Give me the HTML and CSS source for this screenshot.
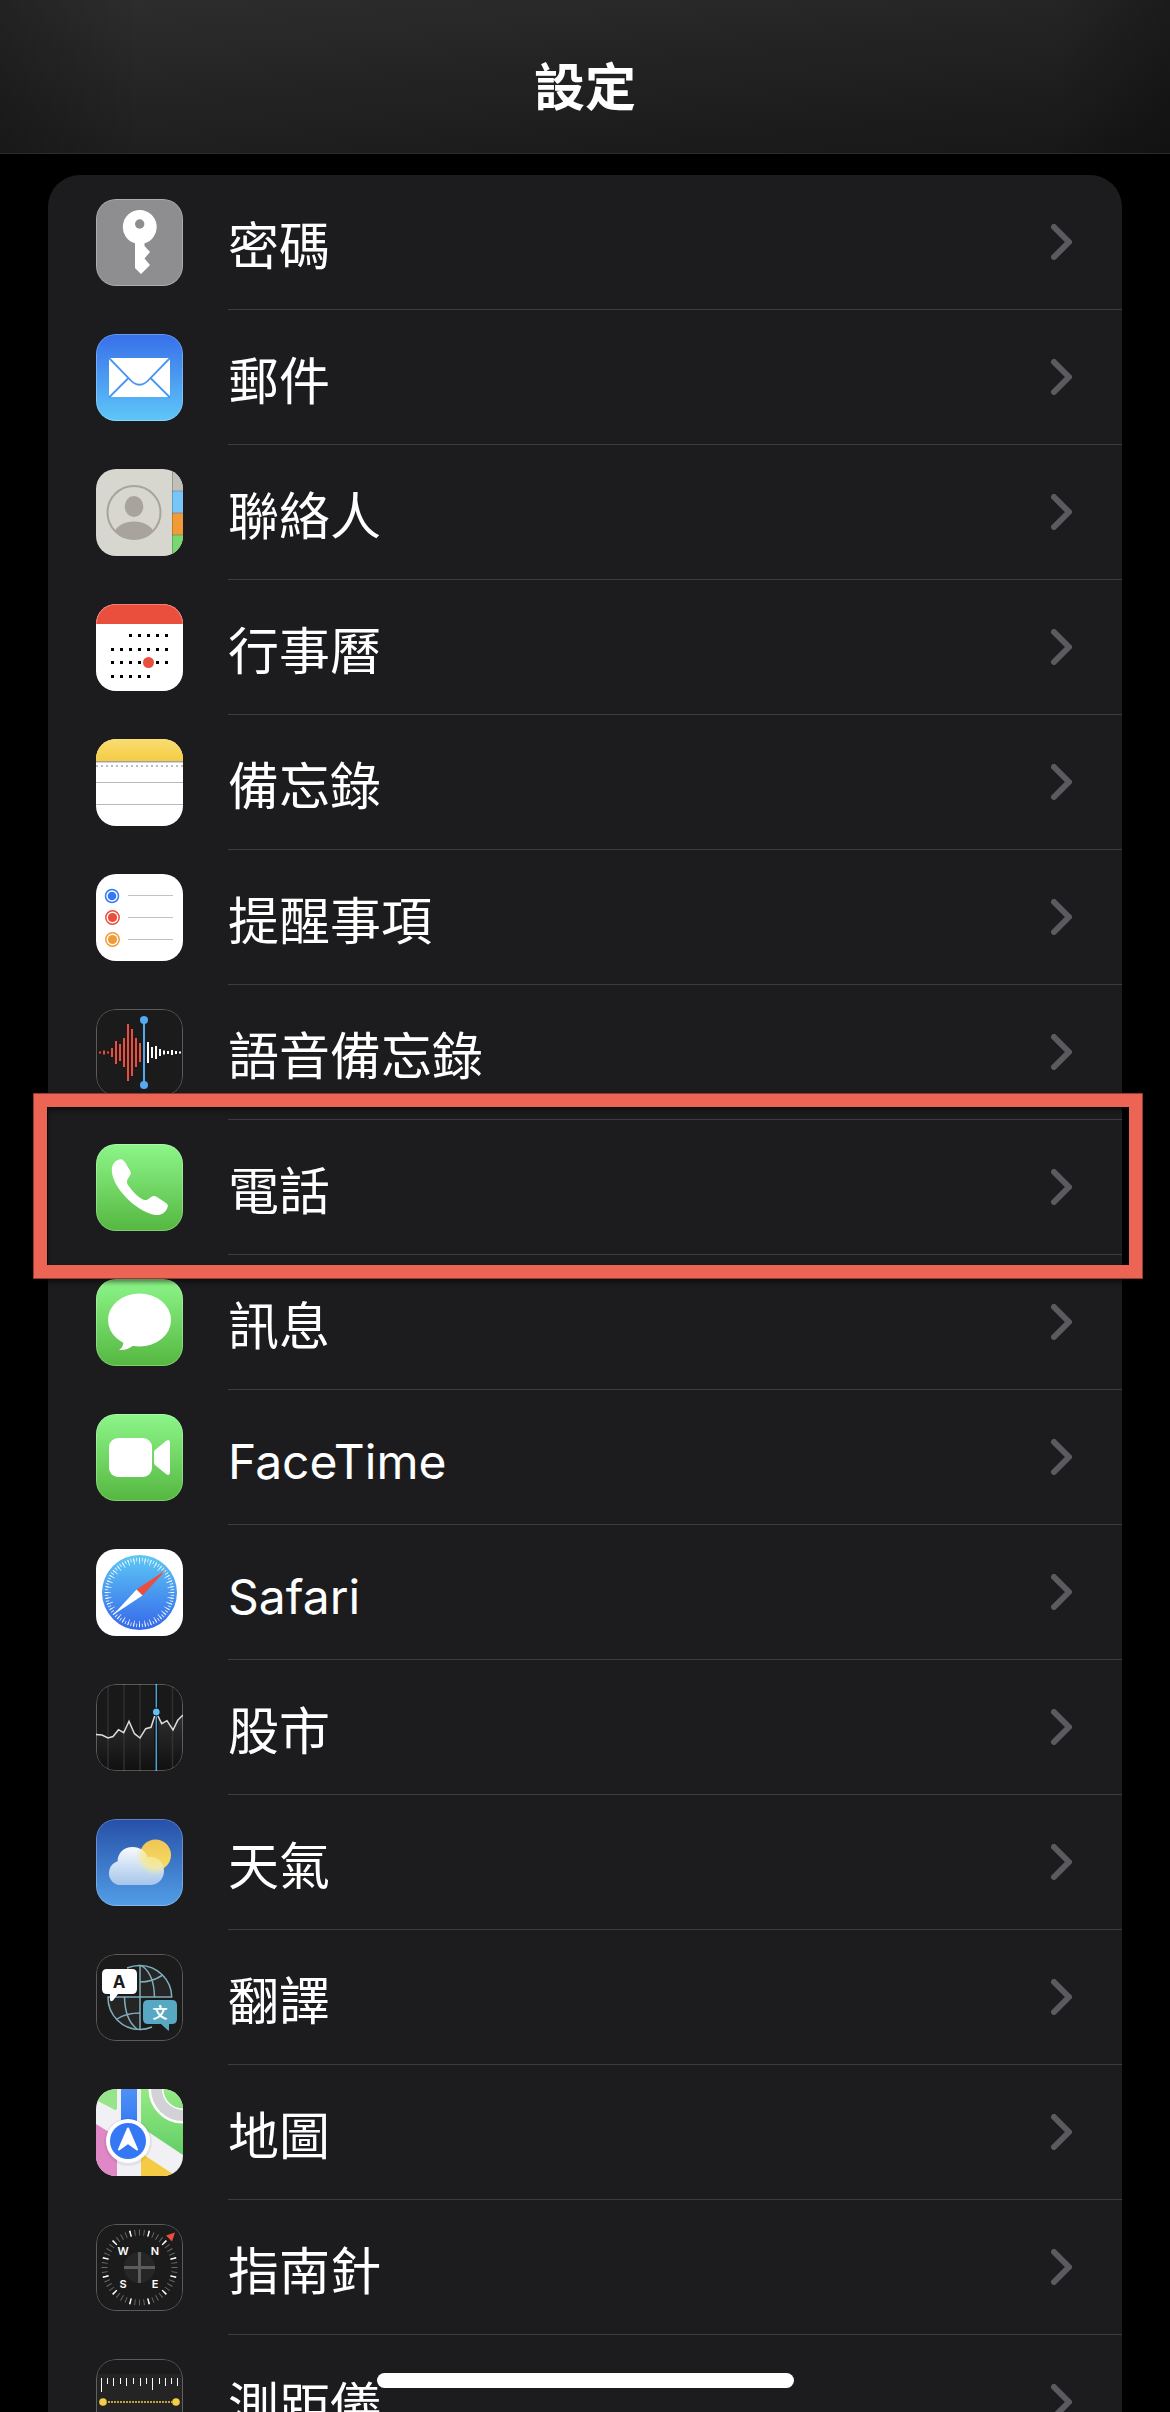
FILE: index.html
```html
<!DOCTYPE html>
<html lang="zh-Hant">
<head>
    <meta charset="UTF-8">
    <meta name="viewport" content="width=device-width, initial-scale=1.0">
    <title>設定</title>
    <link rel="stylesheet" href="styles.css">
</head>
<body>
    <!-- Shared gradients and the row arrow -->
    <svg class="defs" width="0" height="0" aria-hidden="true">
        <defs>
            <linearGradient id="green" x1="0" y1="0" x2="0" y2="1">
                <stop offset="0" stop-color="#8df68a"/>
                <stop offset="1" stop-color="#55b740"/>
            </linearGradient>
            <linearGradient id="blue" x1="0" y1="0" x2="0" y2="1">
                <stop offset="0" stop-color="#376fea"/>
                <stop offset="1" stop-color="#5fc7f8"/>
            </linearGradient>
            <linearGradient id="dial" x1="0" y1="0" x2="0" y2="1">
                <stop offset="0" stop-color="#5ec8f5"/>
                <stop offset="1" stop-color="#3568ea"/>
            </linearGradient>
            <linearGradient id="pad" x1="0" y1="0" x2="0" y2="1">
                <stop offset="0" stop-color="#f9dd72"/>
                <stop offset="1" stop-color="#f5cc43"/>
            </linearGradient>
            <linearGradient id="chart" x1="0" y1="0" x2="0" y2="1">
                <stop offset="0" stop-color="#303031"/>
                <stop offset="1" stop-color="#101010"/>
            </linearGradient>
            <linearGradient id="sky" x1="0" y1="0" x2="0" y2="1">
                <stop offset="0" stop-color="#2750a8"/>
                <stop offset="1" stop-color="#529ee6"/>
            </linearGradient>
            <linearGradient id="sun" x1="0" y1="0" x2="0" y2="1">
                <stop offset="0" stop-color="#efc557"/>
                <stop offset="1" stop-color="#f7de63"/>
            </linearGradient>
            <linearGradient id="cloud" gradientUnits="userSpaceOnUse" x1="0" y1="28" x2="0" y2="66">
                <stop offset="0" stop-color="#f8fafd"/>
                <stop offset="1" stop-color="#a6c6ea"/>
            </linearGradient>
            <radialGradient id="glow" gradientUnits="userSpaceOnUse" cx="59" cy="37" r="19">
                <stop offset="0" stop-color="#f7e583"/>
                <stop offset="0.6" stop-color="#f4ea9a" stop-opacity="0.9"/>
                <stop offset="1" stop-color="#f4ea9a" stop-opacity="0"/>
            </radialGradient>
            <linearGradient id="park" x1="0" y1="0" x2="0" y2="1">
                <stop offset="0" stop-color="#96ea84"/>
                <stop offset="1" stop-color="#62ce66"/>
            </linearGradient>
            <linearGradient id="road" x1="0" y1="0" x2="0" y2="1">
                <stop offset="0" stop-color="#4f91f5"/>
                <stop offset="1" stop-color="#3377f3"/>
            </linearGradient>
            <clipPath id="portrait"><circle cx="38" cy="43.5" r="26.5"/></clipPath>
            <path id="cloud-shape" d="M24.5 66A11.5 11.5 0 0 1 13 54.5C13 48 17 43.5 21.5 42.5C21.5 34 28 28 36.5 28C44 28 50 32.5 51.5 38.5C61 37 68 43.5 68 52C68 60 62 66 54 66Z"/>
            <symbol id="chevron" viewBox="0 0 21 36">
                <path d="M3 3L18 18L3 33" fill="none" stroke="#5b5b5f" stroke-width="6" stroke-linecap="round" stroke-linejoin="round"/>
            </symbol>
        </defs>
    </svg>

    <div class="screen">
        <header class="navbar">
            <h1>設定</h1>
        </header>

        <main class="content">
            <ul class="settings-list">
                <li>
                    <a href="#passwords">
                        <svg class="icon" viewBox="0 0 87 87" aria-hidden="true">
                            <rect width="87" height="87" fill="#8e8e91"/>
                            <path d="M44 11A17 17 0 0 1 48.5 44.3V47L54 53L48.5 59.5L54 66L45 75L39 69V44.3A17 17 0 0 1 44 11Z" fill="#fff"/>
                            <circle cx="43.7" cy="25" r="4.7" fill="#8e8e91"/>
                            <rect class="rim" x="0.5" y="0.5" width="86" height="86" rx="19"/>
                        </svg>
                        <span class="label">密碼</span>
                        <svg class="arrow" aria-hidden="true"><use href="#chevron"/></svg>
                    </a>
                </li>
                <li>
                    <a href="#mail">
                        <svg class="icon" viewBox="0 0 87 87" aria-hidden="true">
                            <rect width="87" height="87" fill="url(#blue)"/>
                            <rect x="13" y="24" width="61" height="39" rx="2" fill="#fff"/>
                            <path d="M13 24L33 44.5Q43.5 57 54 44.5L74 24M32.5 44L13 63.5M54.5 44L74 63.5" fill="none" stroke="#4796f1" stroke-width="1.8"/>
                            <rect class="rim" x="0.5" y="0.5" width="86" height="86" rx="19"/>
                        </svg>
                        <span class="label">郵件</span>
                        <svg class="arrow" aria-hidden="true"><use href="#chevron"/></svg>
                    </a>
                </li>
                <li>
                    <a href="#contacts">
                        <svg class="icon" viewBox="0 0 87 87" aria-hidden="true">
                            <rect width="87" height="87" fill="#d7d7cf"/>
                            <rect x="76" width="11" height="22" fill="#c0c0b9"/>
                            <rect x="76" y="22" width="11" height="22" fill="#78c5f8"/>
                            <rect x="76" y="44" width="11" height="22" fill="#f19b38"/>
                            <rect x="76" y="66" width="11" height="21" fill="#78d772"/>
                            <path d="M76.5 0V87M76 22H87M76 44H87M76 66H87" stroke="#000" stroke-opacity="0.2"/>
                            <ellipse cx="38" cy="37.5" rx="9.3" ry="10.5" fill="#a8a39d"/>
                            <ellipse cx="38" cy="66" rx="20" ry="13.5" fill="#a8a39d" clip-path="url(#portrait)"/>
                            <circle cx="38" cy="43.5" r="26.5" fill="none" stroke="#a8a39d" stroke-width="2"/>
                        </svg>
                        <span class="label">聯絡人</span>
                        <svg class="arrow" aria-hidden="true"><use href="#chevron"/></svg>
                    </a>
                </li>
                <li>
                    <a href="#calendar">
                        <svg class="icon" viewBox="0 0 87 87" aria-hidden="true">
                            <rect width="87" height="87" fill="#fff"/>
                            <rect width="87" height="20" fill="#ea4e3d"/>
                            <path d="M33 31.5H74M15 45.5H74M15 58.5H74M15 72.5H54" stroke="#000" stroke-width="3" stroke-dasharray="3 6"/>
                            <circle cx="52.5" cy="58.5" r="5.5" fill="#ea4e3d"/>
                            <rect class="rim" x="0.5" y="0.5" width="86" height="86" rx="19"/>
                        </svg>
                        <span class="label">行事曆</span>
                        <svg class="arrow" aria-hidden="true"><use href="#chevron"/></svg>
                    </a>
                </li>
                <li>
                    <a href="#notes">
                        <svg class="icon" viewBox="0 0 87 87" aria-hidden="true">
                            <rect width="87" height="87" fill="#fff"/>
                            <rect width="87" height="22" fill="url(#pad)"/>
                            <path d="M0 22.5H87" stroke="#a3a3a6"/>
                            <path d="M0 23.5H87" stroke="#d3d3d6"/>
                            <path d="M0 27H87" stroke="#bcbcbe" stroke-width="2" stroke-dasharray="2 3"/>
                            <path d="M0 43.5H87M0 65.5H87" stroke="#b9b9bb"/>
                        </svg>
                        <span class="label">備忘錄</span>
                        <svg class="arrow" aria-hidden="true"><use href="#chevron"/></svg>
                    </a>
                </li>
                <li>
                    <a href="#reminders">
                        <svg class="icon" viewBox="0 0 87 87" aria-hidden="true">
                            <rect width="87" height="87" fill="#fff"/>
                            <g fill="none" stroke-width="1.5">
                                <circle cx="16" cy="22" r="6.5" stroke="#3478f6"/>
                                <circle cx="16.5" cy="43.5" r="6.7" stroke="#ea4e3d"/>
                                <circle cx="16.5" cy="65.5" r="6.7" stroke="#f19a37"/>
                            </g>
                            <circle cx="16" cy="22" r="4.3" fill="#3478f6"/>
                            <circle cx="16.5" cy="43.5" r="4.6" fill="#ea4e3d"/>
                            <circle cx="16.5" cy="65.5" r="4.6" fill="#f19a37"/>
                            <path d="M32 21.5H77M32 43.5H77M32 65.5H77" stroke="#c2c2c4"/>
                        </svg>
                        <span class="label">提醒事項</span>
                        <svg class="arrow" aria-hidden="true"><use href="#chevron"/></svg>
                    </a>
                </li>
                <li>
                    <a href="#voice-memos">
                        <svg class="icon" viewBox="0 0 87 87" aria-hidden="true">
                            <rect width="87" height="87" fill="#1b1b1b"/>
                            <path d="M4 42.5v2M8 41.5v4M12 42.5v2M16 39v9M20 32v23M24 35v17M28 29v29M32 15v57M36 20v47M40 29v29M44 34v19" stroke="#ea4e3d" stroke-width="2"/>
                            <path d="M52 33v21M56 38v11M60 37v13M64 40v7M68 41.5v4M72 42v3M76 41v5M80 42v3M84 42.5v2" stroke="#fff" stroke-width="2"/>
                            <path d="M48 11V76" stroke="#54a9f0" stroke-width="2"/>
                            <circle cx="48" cy="11" r="4" fill="#54a9f0"/>
                            <circle cx="48" cy="76" r="4" fill="#54a9f0"/>
                            <rect class="rim" x="0.5" y="0.5" width="86" height="86" rx="19"/>
                        </svg>
                        <span class="label">語音備忘錄</span>
                        <svg class="arrow" aria-hidden="true"><use href="#chevron"/></svg>
                    </a>
                </li>
                <li class="highlighted">
                    <a href="#phone">
                        <svg class="icon" viewBox="0 0 87 87" aria-hidden="true">
                            <rect width="87" height="87" fill="url(#green)"/>
                            <path d="M18 19C20 16.5 22.5 15.3 25 15.3C28 15.5 30 20 34.5 27.5C35.5 30 33.5 32 31.5 35.5C30 39 32 41 35 45C39 50 43 53.5 47 55.5C50 57 52 55.5 54.5 53.5C57 51.5 58.5 51.5 61 53L70 59C72.5 60.8 72.3 62.5 70.5 65.5C68 70 64 71.5 59 71C38 66.5 17.5 43 16 28.5C15.5 24.5 16 21.5 18 19Z" fill="#fff"/>
                            <rect class="rim" x="0.5" y="0.5" width="86" height="86" rx="19"/>
                        </svg>
                        <span class="label">電話</span>
                        <svg class="arrow" aria-hidden="true"><use href="#chevron"/></svg>
                    </a>
                </li>
                <li>
                    <a href="#messages">
                        <svg class="icon" viewBox="0 0 87 87" aria-hidden="true">
                            <rect width="87" height="87" fill="url(#green)"/>
                            <ellipse cx="43.5" cy="41" rx="31.5" ry="26.5" fill="#fff"/>
                            <path d="M27 61C28 66 26 69 23 71C29 71.5 34 69.5 38 66Z" fill="#fff"/>
                            <rect class="rim" x="0.5" y="0.5" width="86" height="86" rx="19"/>
                        </svg>
                        <span class="label">訊息</span>
                        <svg class="arrow" aria-hidden="true"><use href="#chevron"/></svg>
                    </a>
                </li>
                <li>
                    <a href="#facetime">
                        <svg class="icon" viewBox="0 0 87 87" aria-hidden="true">
                            <rect width="87" height="87" fill="url(#green)"/>
                            <rect x="13" y="24" width="43" height="39" rx="9" fill="#fff"/>
                            <path d="M59 36L70 27Q74 24.5 74 29V58Q74 62.5 70 60L59 51Q58 50 58 48V39Q58 37 59 36Z" fill="#fff"/>
                            <rect class="rim" x="0.5" y="0.5" width="86" height="86" rx="19"/>
                        </svg>
                        <span class="label latin">FaceTime</span>
                        <svg class="arrow" aria-hidden="true"><use href="#chevron"/></svg>
                    </a>
                </li>
                <li>
                    <a href="#safari">
                        <svg class="icon" viewBox="0 0 87 87" aria-hidden="true">
                            <rect width="87" height="87" fill="#fff"/>
                            <circle cx="43.5" cy="43.5" r="37.5" fill="url(#dial)"/>
                            <g fill="none" stroke="#fff" stroke-opacity="0.85">
                                <circle cx="43.5" cy="43.5" r="33" pathLength="72" stroke-width="3.5" stroke-dasharray="0.3 0.7" stroke-dashoffset="0.15"/>
                                <circle cx="43.5" cy="43.5" r="31.5" pathLength="36" stroke-width="6" stroke-dasharray="0.15 0.85" stroke-dashoffset="0.075"/>
                            </g>
                            <path d="M70 21L40.5 40.5L46.5 46.5Z" fill="#ea4e3d"/>
                            <path d="M17 66L40.5 40.5L46.5 46.5Z" fill="#fff"/>
                        </svg>
                        <span class="label latin">Safari</span>
                        <svg class="arrow" aria-hidden="true"><use href="#chevron"/></svg>
                    </a>
                </li>
                <li>
                    <a href="#stocks">
                        <svg class="icon" viewBox="0 0 87 87" aria-hidden="true">
                            <rect width="87" height="87" fill="#19191a"/>
                            <path d="M0 50.5L6 51L12 54L17 52.5L22.5 45.7L27.7 48.7L33 37.3L38.5 49.7L44 54L49.7 44.7L55 43.3L60 28L65.7 39.7L71 36.7L77 46L81.7 36.3L87 31V87H0Z" fill="url(#chart)"/>
                            <path d="M12 0V87M28 0V87M44 0V87M76.5 0V87" stroke="#3a3a3b" stroke-opacity="0.7" stroke-width="1.5"/>
                            <path d="M60.3 0V87" stroke="#111" stroke-width="4"/>
                            <path d="M0 50.5L6 51L12 54L17 52.5L22.5 45.7L27.7 48.7L33 37.3L38.5 49.7L44 54L49.7 44.7L55 43.3L60 28L65.7 39.7L71 36.7L77 46L81.7 36.3L87 31" fill="none" stroke="#dcdcdc" stroke-width="1.5"/>
                            <path d="M60.3 0V87" stroke="#4ba0d4" stroke-width="1.5"/>
                            <circle cx="60.3" cy="28" r="4" fill="#5ec4f5" stroke="#111"/>
                            <rect class="rim" x="0.5" y="0.5" width="86" height="86" rx="19"/>
                        </svg>
                        <span class="label">股市</span>
                        <svg class="arrow" aria-hidden="true"><use href="#chevron"/></svg>
                    </a>
                </li>
                <li>
                    <a href="#weather">
                        <svg class="icon" viewBox="0 0 87 87" aria-hidden="true">
                            <rect width="87" height="87" fill="url(#sky)"/>
                            <circle cx="59.5" cy="36" r="15.5" fill="url(#sun)"/>
                            <use href="#cloud-shape" fill="url(#cloud)"/>
                            <use href="#cloud-shape" fill="url(#glow)"/>
                            <rect class="rim" x="0.5" y="0.5" width="86" height="86" rx="19"/>
                        </svg>
                        <span class="label">天氣</span>
                        <svg class="arrow" aria-hidden="true"><use href="#chevron"/></svg>
                    </a>
                </li>
                <li>
                    <a href="#translate">
                        <svg class="icon" viewBox="0 0 87 87" aria-hidden="true">
                            <rect width="87" height="87" fill="#1b1b1b"/>
                            <g fill="#252525" stroke="#7fafbd" stroke-width="1.5">
                                <path d="M44 11.5A32 32 0 0 1 75.7 43H44Z"/>
                                <path d="M12 43A32 32 0 0 0 44 75.5V43Z"/>
                                <path d="M31 14Q37 11.5 44 11.5M44 75.5Q50 75.5 56 73" fill="none"/>
                                <path d="M46 12Q58 20 58.5 43M44 28Q56 28 66 21.5" fill="none"/>
                                <path d="M28.5 43Q29 66 41 75M44 59Q30 59 21 65" fill="none"/>
                            </g>
                            <path d="M10 15H36Q41 15 41 20V35Q41 40 36 40H22L17 46.5Q14 48.5 14 45V40H11Q6 40 6 35V20Q6 15 11 15Z" fill="#fff"/>
                            <path d="M52 46H76Q81 46 81 51V65Q81 70 76 70H73V76Q73 77.5 71.5 76L65 70H52Q47 70 47 65V51Q47 46 52 46Z" fill="#56a8c3"/>
                            <text class="glyph-a" x="23" y="34">A</text>
                            <text class="glyph-wen" x="64" y="64">文</text>
                            <rect class="rim" x="0.5" y="0.5" width="86" height="86" rx="19"/>
                        </svg>
                        <span class="label">翻譯</span>
                        <svg class="arrow" aria-hidden="true"><use href="#chevron"/></svg>
                    </a>
                </li>
                <li>
                    <a href="#maps">
                        <svg class="icon" viewBox="0 0 87 87" aria-hidden="true">
                            <rect width="87" height="87" fill="#f0f0f5"/>
                            <path d="M0 0H21V19Q21 22 18 20.5L0 11Z" fill="#96e58a"/>
                            <path d="M45 0H87V66L45 38Z" fill="url(#park)"/>
                            <path d="M0 35L21 48V87H0Z" fill="#e088c6"/>
                            <path d="M45 64L77 85L72 87H45Z" fill="#f5cb45"/>
                            <circle cx="87" cy="0" r="27" fill="none" stroke="#fff" stroke-width="15"/>
                            <circle cx="87" cy="0" r="26.5" fill="none" stroke="#d1d1d6" stroke-width="11"/>
                            <path d="M25 0H41V40H25Z" fill="url(#road)"/>
                            <circle cx="32" cy="53" r="24" fill="#000" fill-opacity="0.06"/>
                            <circle cx="32" cy="52" r="22" fill="#fff"/>
                            <circle cx="32" cy="52" r="18" fill="#3478f6"/>
                            <path d="M32 39.5L41 60.5L32 54L23 60.5Z" fill="#fff" stroke="#fff" stroke-width="2" stroke-linejoin="round"/>
                        </svg>
                        <span class="label">地圖</span>
                        <svg class="arrow" aria-hidden="true"><use href="#chevron"/></svg>
                    </a>
                </li>
                <li>
                    <a href="#compass">
                        <svg class="icon" viewBox="0 0 87 87" aria-hidden="true">
                            <rect width="87" height="87" fill="#1b1b1b"/>
                            <circle cx="43.5" cy="43.5" r="35" fill="none" stroke="#6c6c6e" stroke-width="6" pathLength="48" stroke-dasharray="0.2 0.8" stroke-dashoffset="0.1"/>
                            <circle cx="43.5" cy="43.5" r="35" fill="none" stroke="#fff" stroke-width="6" pathLength="12" stroke-dasharray="0.08 0.92" stroke-dashoffset="0.04" transform="rotate(15 43.5 43.5)"/>
                            <circle cx="43.5" cy="43.5" r="15.5" fill="#262627"/>
                            <path d="M28 43.5H59M43.5 28V59" stroke="#5c5c5e" stroke-width="3"/>
                            <path d="M70 11.5L79 8.5L76 17.5Z" fill="#ea4e3d"/>
                            <g class="bearings">
                                <text x="27" y="31">W</text>
                                <text x="59" y="31">N</text>
                                <text x="27" y="64">S</text>
                                <text x="59" y="64">E</text>
                            </g>
                            <rect class="rim" x="0.5" y="0.5" width="86" height="86" rx="19"/>
                        </svg>
                        <span class="label">指南針</span>
                        <svg class="arrow" aria-hidden="true"><use href="#chevron"/></svg>
                    </a>
                </li>
                <li>
                    <a href="#measure">
                        <svg class="icon" viewBox="0 0 87 87" aria-hidden="true">
                            <rect width="87" height="87" fill="#1b1b1b"/>
                            <rect y="15" width="87" height="57" fill="#242425"/>
                            <path d="M5.5 19v14M11.5 19v6M17.5 19v8M24.5 19v6M30.5 19v8M37.5 19v6M44.5 19v8M50.5 19v6M56.5 19v12M63.5 19v6M69.5 19v8M75.5 19v6M81.5 19v8" stroke="#fff"/>
                            <path d="M12 43H76" stroke="#f5cc45" stroke-width="1.5" stroke-dasharray="2 1"/>
                            <circle cx="7" cy="43" r="3.8" fill="#f5cc45"/>
                            <circle cx="80" cy="43" r="3.8" fill="#f5cc45"/>
                            <rect class="rim" x="0.5" y="0.5" width="86" height="86" rx="19"/>
                        </svg>
                        <span class="label">測距儀</span>
                        <svg class="arrow" aria-hidden="true"><use href="#chevron"/></svg>
                    </a>
                </li>
            </ul>
        </main>

        <div class="home-indicator"></div>
    </div>
</body>
</html>
```
FILE: styles.css
```css
* {
    box-sizing: border-box;
}

body {
    font-family: Inter, "Noto Sans CJK TC", sans-serif;
    background-color: #000000;
    color: #ffffff;
    margin: 0;
}

.defs {
    position: absolute;
}

.screen {
    position: relative;
    display: flex;
    flex-direction: column;
    height: 100vh;
    overflow: hidden;
}

.navbar {
    flex: none;
    display: flex;
    justify-content: center;
    padding: 50px 48px 27px;
    border-bottom: 1px solid #2b2b2c;
    background:
        linear-gradient(90deg, rgba(0, 0, 0, 0.25), transparent 12%, transparent 90%, rgba(0, 0, 0, 0.25)),
        linear-gradient(175deg, #2e2e2e, #222222 50%, #171717);
}

h1 {
    margin: 0;
    font-size: 51px;
    font-weight: 700;
    line-height: 76px;
}

.content {
    flex: 1;
    min-height: 0;
    padding: 21px 48px 0;
    overflow: hidden;
}

.settings-list {
    list-style: none;
    margin: 0;
    padding: 0;
    border-radius: 32px;
    background-color: #1c1c1e;
}

.settings-list li {
    position: relative;
}

.settings-list a {
    display: flex;
    align-items: center;
    gap: 45px;
    padding-left: 48px;
    color: inherit;
    text-decoration: none;
}

.icon {
    flex: none;
    width: 87px;
    height: 87px;
    border-radius: 20px;
}

.rim {
    fill: none;
    stroke: #ffffff;
    stroke-opacity: 0.28;
}

/* the divider runs on under the arrow to the card edge */
.label {
    flex: 1;
    height: 135px;
    margin-right: -116px;
    padding-top: 8px;
    border-bottom: 1px solid #3d3d40;
    font-size: 51px;
    line-height: 128px;
}

.latin {
    font-size: 48px;
}

.arrow {
    flex: none;
    width: 21px;
    height: 36px;
    margin-right: 50px;
    margin-bottom: 2px;
}

.highlighted::after {
    content: "";
    position: absolute;
    z-index: 1;
    top: -27px;
    right: -21px;
    bottom: -24px;
    left: -15px;
    border: 14px solid #ec6453;
    outline: 1px solid rgba(90, 30, 25, 0.6);
    outline-offset: -1px;
    box-shadow: 0 3px 5px rgba(0, 0, 0, 0.5), inset 0 3px 5px rgba(0, 0, 0, 0.5);
    pointer-events: none;
}

.glyph-a,
.glyph-wen {
    text-anchor: middle;
    font-weight: 700;
}

.glyph-a {
    fill: #1b1b1b;
    font-size: 17px;
}

.glyph-wen {
    fill: #ffffff;
    font-size: 15px;
}

.bearings {
    fill: #ffffff;
    font-size: 11px;
    font-weight: 600;
    text-anchor: middle;
}

.home-indicator {
    position: absolute;
    bottom: 24px;
    left: 50%;
    width: 417px;
    height: 15px;
    margin-left: -208px;
    border-radius: 8px;
    background-color: #ffffff;
}
```
